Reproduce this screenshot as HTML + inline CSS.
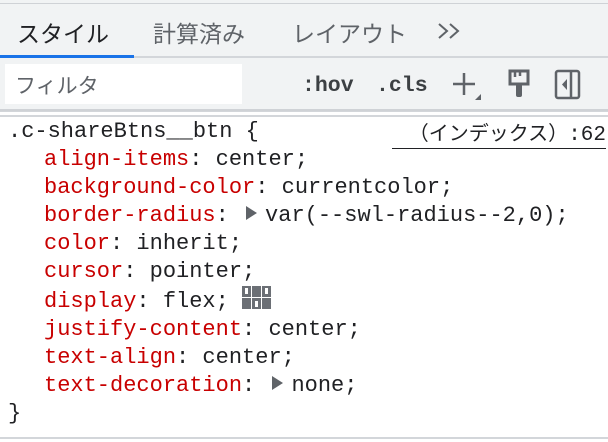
<!DOCTYPE html>
<html><head><meta charset="utf-8"><style>
*{margin:0;padding:0;box-sizing:border-box}
body{width:608px;height:442px;background:#fff;position:relative;overflow:hidden;font-family:"Liberation Sans","Noto Sans CJK JP",sans-serif}
.top{position:absolute;left:0;top:0;width:608px;height:4px;background:#f1f3f4;border-bottom:1px solid #cfd2d6}
.tabs{position:absolute;left:0;top:4px;width:608px;height:54px;background:#f1f3f4;border-bottom:2px solid #d3d6da}
.tab{position:absolute;top:11px;font-size:23px;color:#5f6368}
.ul{position:absolute;left:0;top:55px;width:134px;height:3px;background:#1a73e8}
.tb{position:absolute;left:0;top:58px;width:608px;height:53px;background:#f1f3f4;border-bottom:2px solid #cfd2d6}
.filter{position:absolute;left:5px;top:6px;width:237px;height:40px;background:#fff;font-size:21px;color:#5f6368;padding:6px 0 0 10px}
.btn{position:absolute;top:16px;font-family:"Liberation Mono",monospace;font-weight:bold;font-size:21.5px;color:#3c4043}
.sep{position:absolute;left:0;top:115px;width:608px;height:2px;background:#d3d6da}
.code{position:absolute;left:8px;top:118px;font-family:"Liberation Mono","Noto Sans CJK JP",monospace;font-size:22px;line-height:28px;color:#202124;white-space:pre}
.code .i{padding-left:36px}
.p{color:#c80000}
.tri{display:inline-block;width:0;height:0;border-left:11px solid #5f6368;border-top:7px solid transparent;border-bottom:7px solid transparent;margin:0 8px 0 4px;vertical-align:1px}
.src{position:absolute;left:392px;top:122px;width:214px;text-align:right;font-size:20px;color:#202124;border-bottom:1px solid #202124;line-height:24px;white-space:nowrap}
.bot{position:absolute;left:0;top:437px;width:608px;height:2px;background:#d3d6da}
</style></head><body>
<div class="top"></div>
<div class="tabs">
<span class="tab" style="left:17px;color:#202124">スタイル</span>
<span class="tab" style="left:153px">計算済み</span>
<span class="tab" style="left:292px">レイアウト</span>
<svg style="position:absolute;left:437px;top:17px" width="26" height="20"><path d="M2 3L10 10L2 17M13 3L21 10L13 17" fill="none" stroke="#5f6368" stroke-width="2"/></svg>
</div>
<div class="ul"></div>
<div class="tb">
<div class="filter">フィルタ</div>
<span class="btn" style="left:302px">:hov</span>
<span class="btn" style="left:376px">.cls</span>
<svg style="position:absolute;left:450px;top:12px" width="34" height="32"><path d="M3 14H25M14 3V25" stroke="#5f6368" stroke-width="2.5"/><path d="M25 30L31 24V30Z" fill="#5f6368"/></svg>
<svg style="position:absolute;left:507px;top:10px" width="24" height="34"><path d="M3 3H21V16H3Z" fill="none" stroke="#5f6368" stroke-width="3"/><path d="M8 3V9M13 3V8" stroke="#5f6368" stroke-width="2.5"/><rect x="9" y="16" width="6" height="13" rx="2" fill="#5f6368"/></svg>
<svg style="position:absolute;left:554px;top:10px" width="28" height="34"><rect x="2" y="3" width="23" height="27" rx="2" fill="none" stroke="#5f6368" stroke-width="2.5"/><path d="M17 3V30" stroke="#5f6368" stroke-width="2.5"/><path d="M13 11L8 16.5L13 22Z" fill="#5f6368"/></svg>
</div>
<div class="sep" style="top:111px;height:1px"></div>
<div class="sep"></div>
<div class="src">（インデックス）<span style="font-family:'Liberation Mono',monospace;font-size:21px">:62</span></div>
<div class="code">.c-shareBtns__btn {
<span class="i"><span class="p">align-items</span>: center;</span>
<span class="i"><span class="p">background-color</span>: currentcolor;</span>
<span class="i"><span class="p">border-radius</span>: <span class="tri"></span>var(--swl-radius--2,0);</span>
<span class="i"><span class="p">color</span>: inherit;</span>
<span class="i"><span class="p">cursor</span>: pointer;</span>
<span class="i"><span class="p">display</span>: flex; <svg width="30" height="24" style="vertical-align:-3px"><g fill="#6b6f75"><rect x="0" y="0" width="9" height="11"/><rect x="10" y="0" width="9" height="11"/><rect x="20" y="0" width="9" height="11"/><rect x="0" y="12" width="9" height="11"/><rect x="10" y="12" width="9" height="11"/><rect x="20" y="12" width="9" height="11"/></g><g fill="#fff"><rect x="3" y="2" width="3" height="6"/><rect x="23" y="2" width="3" height="6"/><rect x="13" y="15" width="3" height="6"/></g></svg></span>
<span class="i"><span class="p">justify-content</span>: center;</span>
<span class="i"><span class="p">text-align</span>: center;</span>
<span class="i"><span class="p">text-decoration</span>: <span class="tri"></span>none;</span>
}</div>
<div class="bot"></div>
</body></html>
